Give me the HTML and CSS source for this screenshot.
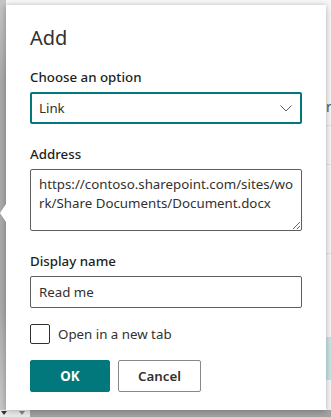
FILE: index.html
```html
<!DOCTYPE html>
<html lang="en">
<head>
    <meta charset="UTF-8">
    <meta name="viewport" content="width=device-width, initial-scale=1.0">
    <title>Add link</title>
    <link rel="stylesheet" href="styles.css">
</head>
<body>
    <!-- Page behind the callout -->
    <div class="behind">
        <div class="rail"></div>
        <div class="row-line line-1"></div>
        <div class="row-line line-2"></div>
        <div class="row-line line-3"></div>
        <div class="row-selected"></div>
        <span class="stray">r</span>
        <div class="footer-bar">
            <span class="tri"></span>
            <span class="tri small"></span>
        </div>
    </div>

    <!-- Add link callout -->
    <div class="callout">
        <div class="beak"></div>
        <form class="panel" onsubmit="return false">
            <h2 class="title">Add</h2>

            <div class="field">
                <label class="label">Choose an option</label>
                <div class="dropdown">
                    <span>Link</span>
                    <svg class="chevron" width="12" height="7" viewBox="0 0 12 7">
                        <path d="M0.5 0.5 L6 6 L11.5 0.5" fill="none" stroke="#605e5c" stroke-width="1"/>
                    </svg>
                </div>
            </div>

            <div class="field">
                <label class="label" for="address">Address</label>
                <textarea id="address" class="textarea">https://contoso.sharepoint.com/sites/wo
rk/Share Documents/Document.docx</textarea>
            </div>

            <div class="field">
                <label class="label" for="display">Display name</label>
                <input id="display" class="input" type="text" value="Read me">
            </div>

            <label class="check">
                <span class="box"></span>
                <span>Open in a new tab</span>
            </label>

            <div class="buttons">
                <button class="btn primary">OK</button>
                <button class="btn cancel">Cancel</button>
            </div>
        </form>
    </div>
</body>
</html>
```

FILE: styles.css
```css
* {
    margin: 0;
    padding: 0;
    box-sizing: border-box;
}

body {
    width: 331px;
    height: 417px;
    overflow: hidden;
    position: relative;
    background-color: #f6f6f6;
    font-family: "Noto Sans", "Open Sans", sans-serif;
    font-size: 13.3px;
    color: #323130;
    padding: 5px 5px 0 6px;
}

/* Page behind the callout */
.behind {
    position: absolute;
    inset: 0;
}

.rail {
    position: absolute;
    left: 0;
    top: 0;
    width: 6px;
    height: 410px;
    background: linear-gradient(#c4c4c4, #a9a9a9 20%, #a9a9a9 75%, #c8c8c8);
}

.row-line {
    position: absolute;
    left: 326px;
    right: 0;
    height: 1px;
    background-color: #e4e4e4;
}

.line-1 { top: 125px; }
.line-2 { top: 164px; }
.line-3 { top: 253px; }

.row-selected {
    position: absolute;
    left: 326px;
    right: 0;
    top: 337px;
    height: 43px;
    background-color: #cbe3e3;
}

.stray {
    position: absolute;
    left: 326px;
    top: 97px;
    font-size: 14px;
    color: #555;
}

.footer-bar {
    position: absolute;
    left: 0;
    right: 0;
    top: 410px;
    bottom: 0;
    background: linear-gradient(90deg, #ececec 30px, #a3a3a3 30px);
}

.tri {
    position: absolute;
    left: 1px;
    top: 1px;
    border-left: 3px solid transparent;
    border-right: 3px solid transparent;
    border-top: 4px solid #333;
}

.tri.small {
    left: 19px;
    border-top-color: #888;
}

/* Callout */
.callout {
    position: relative;
    width: 320px;
    height: 405px;
    background-color: #fff;
    box-shadow: 0 0 5px rgba(0, 0, 0, 0.18), 0 3px 8px rgba(0, 0, 0, 0.12);
}

.beak {
    position: absolute;
    left: -6px;
    top: 199px;
    width: 0;
    height: 0;
    border-top: 9px solid transparent;
    border-bottom: 9px solid transparent;
    border-right: 6px solid #fff;
}

.panel {
    padding: 19px 24px 0 24px;
}

.title {
    font-size: 20px;
    font-weight: 400;
    line-height: 28px;
    margin-bottom: 10px;
}

.field {
    margin-bottom: 15px;
}

.label {
    display: block;
    font-weight: 500;
    line-height: 20px;
    padding: 5px 0;
    color: #201f1e;
}

.dropdown {
    height: 32px;
    border: 2px solid #03787c;
    border-radius: 2px;
    display: flex;
    align-items: center;
    justify-content: space-between;
    padding: 0 8px 0 7px;
}

.chevron {
    margin-top: 1px;
}

.textarea {
    display: block;
    width: 100%;
    height: 62px;
    border: 1px solid #605e5c;
    border-radius: 2px;
    padding: 5px 4px 4px 8px;
    font: inherit;
    line-height: 19px;
    color: #323130;
    resize: vertical;
    overflow: hidden;
    white-space: pre-wrap;
}

.input {
    display: block;
    width: 100%;
    height: 32px;
    border: 1px solid #605e5c;
    border-radius: 2px;
    padding: 0 8px;
    font: inherit;
    color: #323130;
}

.check {
    display: flex;
    align-items: center;
    gap: 8px;
    margin-top: 16px;
    margin-bottom: 16px;
}

.box {
    width: 20px;
    height: 20px;
    border: 1px solid #323130;
    border-radius: 2px;
}

.buttons {
    display: flex;
    gap: 8px;
}

.btn {
    height: 32px;
    min-width: 80px;
    padding: 0 16px;
    border: 1px solid #8a8886;
    border-radius: 2px;
    background-color: #fff;
    font: inherit;
    font-weight: 600;
    color: #323130;
}

.btn.cancel {
    min-width: 83px;
}

.btn.primary {
    background-color: #03787c;
    border-color: #03787c;
    color: #fff;
    font-weight: 700;
}
```
